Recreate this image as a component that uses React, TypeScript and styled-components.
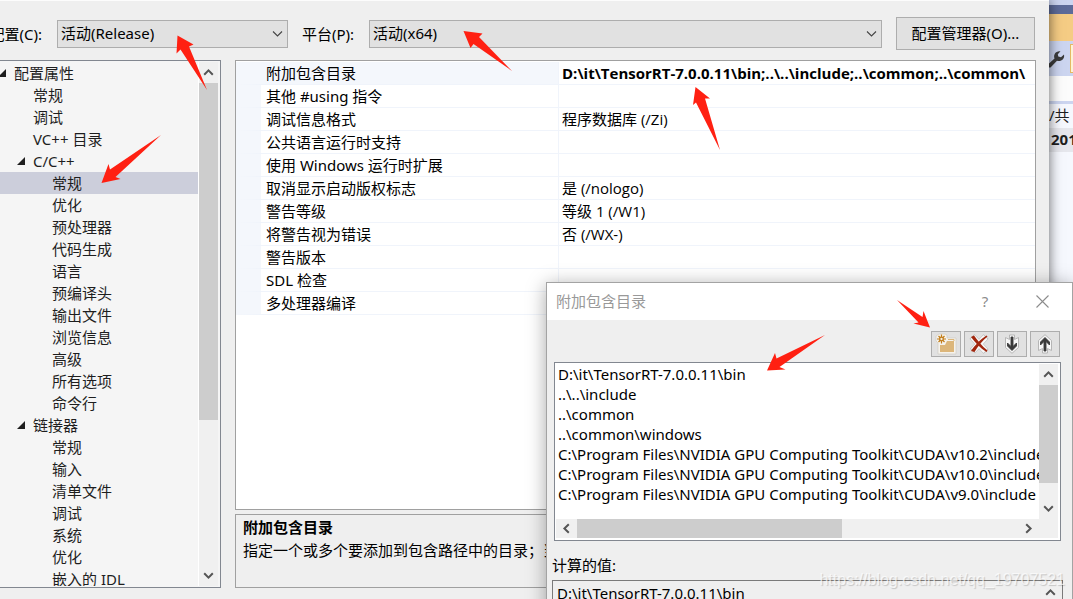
import React from "react";
import styled, { createGlobalStyle } from "styled-components";

const GlobalStyle = createGlobalStyle`
  * { box-sizing: border-box; }
  body {
    margin: 0;
    overflow: hidden;
    background: #efefef;
    color: #000;
    font: 15px/20px "Noto Sans", "Noto Sans CJK SC", sans-serif;
  }
  button, select, textarea, table { font: inherit; color: inherit; }
  ul { margin: 0; padding: 0; list-style: none; }
`;

const Desktop = styled.div`
  position: relative;
  display: flex;
  height: 100vh;
  overflow: hidden;
`;

/* ---------- Property pages window ---------- */

const PropertyWindow = styled.main`
  position: relative;
  z-index: 1;
  flex: 1;
  min-width: 0;
  display: flex;
  flex-direction: column;
  gap: 10px;
  padding: 16px 0 11px;
  background: #efefef;
  border-top: 1px solid #fcfcfc;
  box-shadow: 0 0 12px rgba(0, 0, 0, 0.6);
`;

const ConfigBar = styled.div`
  display: flex;
  align-items: center;
  padding-right: 14px;
`;

const ConfigLabel = styled.label<{ $width: number }>`
  flex: none;
  display: flex;
  justify-content: flex-end;
  width: ${(p) => p.$width}px;
  padding-right: 15px;
  overflow: hidden;
  white-space: nowrap;
`;

const SelectBox = styled.div<{ $width?: number }>`
  position: relative;
  flex: ${(p) => (p.$width ? `0 0 ${p.$width}px` : "1")};
  display: flex;

  svg {
    position: absolute;
    right: 5px;
    top: 10px;
    pointer-events: none;
  }
`;

const Select = styled.select`
  appearance: none;
  width: 100%;
  height: 28px;
  padding: 0 24px 2px 3px;
  border: 1px solid #adadad;
  border-radius: 0;
  background: #e1e1e1;
`;

const ManagerButton = styled.button`
  flex: none;
  width: 139px;
  height: 33px;
  margin-left: 14px;
  padding: 0 0 2px;
  border: 1px solid #adadad;
  background: #e1e1e1;
`;

const Columns = styled.div`
  flex: 1;
  min-height: 0;
  display: flex;
  gap: 14px;
  padding-right: 13px;
`;

const TreePane = styled.nav`
  flex: none;
  display: flex;
  width: 221px;
  padding: 1px 2px 1px 0;
  background: #f5f5f5;
  border: 1px solid #828790;
  border-left: 0;
`;

const TreeList = styled.ul`
  flex: 1;
  overflow: hidden;
  border-right: 1px solid #fff;
  color: #1e1e1e;
  line-height: 22px;
`;

const TreeRow = styled.li<{ $selected?: boolean }>`
  display: flex;
  height: 22px;
  white-space: nowrap;
  background: ${(p) => (p.$selected ? "#cccedb" : "transparent")};
`;

const Indent = styled.span<{ $level: number }>`
  flex: none;
  display: flex;
  align-items: center;
  justify-content: flex-end;
  width: ${(p) => 14 + 19 * p.$level}px;
  padding-right: 8px;

  svg { flex: none; }
`;

const Details = styled.div`
  flex: 1;
  min-width: 0;
  display: flex;
  flex-direction: column;
  gap: 4px;
`;

const GridPane = styled.div`
  flex: 1;
  min-height: 0;
  padding-top: 1px;
  overflow: hidden;
  background: #fff;
  border: 1px solid #a0a0a0;
`;

const PropertyTable = styled.table`
  width: 100%;
  table-layout: fixed;
  border-collapse: separate;
  border-spacing: 0;
`;

const GridRow = styled.tr<{ $active?: boolean }>`
  th, td {
    height: 23px;
    padding: 0 0 0 3px;
    overflow: hidden;
    white-space: nowrap;
    text-align: left;
    font-weight: 400;
    border-bottom: 1px solid #f0f4fb;
  }
  th {
    width: 323px;
    padding-left: 5px;
    border-left: 25px solid #f4f7fc;
    border-right: 1px solid #f0f4fb;
    background: ${(p) => (p.$active ? "#f4f7fc" : "#fff")};
  }
  td {
    font-family: "Open Sans", "Noto Sans CJK SC", sans-serif;
    font-weight: ${(p) => (p.$active ? 700 : 400)};
  }
`;

const Description = styled.section`
  flex: none;
  height: 74px;
  padding: 1px 7px;
  border: 1px solid #a0a0a0;
  overflow: hidden;
  line-height: 23px;
  white-space: nowrap;
`;

const DescriptionTitle = styled.div`
  font-weight: 700;
`;

/* ---------- Scroll bars ---------- */

const ScrollBar = styled.div<{ $horizontal?: boolean }>`
  flex: none;
  display: flex;
  flex-direction: ${(p) => (p.$horizontal ? "row" : "column")};
  ${(p) => (p.$horizontal ? "height" : "width")}: 19px;
  background: #f0f0f0;
`;

const ScrollButton = styled.button`
  flex: none;
  display: flex;
  align-items: center;
  justify-content: center;
  width: 21px;
  height: 21px;
  padding: 0;
  border: 0;
  background: transparent;

  ${ScrollBar} > & { align-self: center; }
`;

const ScrollTrack = styled.div`
  flex: 1;
  min-width: 0;
  min-height: 0;
`;

const ScrollThumb = styled.div<{ $horizontal?: boolean; $size: string }>`
  ${(p) => (p.$horizontal ? "width" : "height")}: ${(p) => p.$size};
  ${(p) => (p.$horizontal ? "height" : "width")}: 19px;
  background: #cdcdcd;
`;

/* ---------- IDE behind the window ---------- */

const IdeStrip = styled.aside`
  flex: none;
  width: 24px;
  overflow: hidden;
  background: #f6f8fe;
  white-space: nowrap;
  color: #1e1e1e;
`;

const Band = styled.div<{ $height: number; $color: string }>`
  height: ${(p) => p.$height}px;
  background: ${(p) => p.$color};
`;

const IdeTools = styled.div`
  display: flex;
  align-items: center;
  gap: 5px;
  height: 35px;
  background: #ccd5f0;

  svg { flex: none; }
`;

const ActiveTool = styled.span`
  flex: none;
  width: 24px;
  height: 29px;
  background: #fdf4d8;
  border: 1px solid #e5b964;
`;

const IdeLine = styled.div<{ $strong?: boolean }>`
  height: 24px;
  padding-left: ${(p) => (p.$strong ? 2 : 0)}px;
  line-height: 22px;
  font-weight: ${(p) => (p.$strong ? 700 : 400)};
  background: ${(p) => (p.$strong ? "#e6e7ed" : "#f6f8fe")};
`;

/* ---------- Include directories dialog ---------- */

const Dialog = styled.section`
  position: absolute;
  z-index: 2;
  top: 282px;
  right: 0;
  width: 527px;
  height: 420px;
  background: #efefef;
  border: 1px solid #a3a3a3;
  box-shadow: 0 3px 18px rgba(0, 0, 0, 0.35);
`;

const TitleBar = styled.header`
  display: flex;
  align-items: center;
  height: 37px;
  padding: 0 9px 1px;
  background: #fff;
  color: #999;
`;

const Title = styled.span`
  flex: 1;
`;

const TitleButton = styled.button`
  width: 42px;
  height: 28px;
  margin-left: 15px;
  padding: 0;
  border: 0;
  background: transparent;
  color: #8c8c8c;

  svg { display: block; margin: auto; }
`;

const DialogTools = styled.div`
  display: flex;
  justify-content: flex-end;
  gap: 3px;
  padding: 11px 12px 5px;
`;

const ToolButton = styled.button`
  display: flex;
  align-items: center;
  justify-content: center;
  width: 30px;
  height: 26px;
  padding: 0;
  border: 1px solid #adadad;
  background: #e1e1e1;
`;

const ListPane = styled.div`
  display: flex;
  height: 179px;
  margin: 0 11px 0 7px;
  padding: 1px 2px 2px 1px;
  background: #fff;
  border: 1px solid #828790;
`;

const ListBody = styled.div`
  flex: 1;
  min-width: 0;
  display: flex;
  flex-direction: column;
`;

const PathList = styled.ul`
  flex: 1;
  padding-left: 2px;
  overflow: hidden;
  white-space: nowrap;
`;

const ScrollSide = styled.div`
  display: flex;
  flex-direction: column;
  padding-bottom: 19px;
  background: #f0f0f0;

  ${ScrollBar} { flex: 1; }
`;

const ValueLabel = styled.label`
  display: block;
  padding: 14px 5px 5px;
`;

const ValueBox = styled.div`
  display: flex;
  height: 100px;
  margin: 0 9px 0 5px;
  padding: 1px 2px 0 0;
  border: 1px solid #7a7a7a;
`;

const ValueText = styled.textarea`
  flex: 1;
  min-width: 0;
  padding: 1px 4px;
  border: 0;
  background: transparent;
  resize: none;
  outline: none;
`;

/* ---------- Annotations ---------- */

const Annotations = styled.svg`
  position: absolute;
  z-index: 3;
  top: 0;
  left: 0;
  pointer-events: none;
`;

const Watermark = styled.div`
  position: absolute;
  z-index: 4;
  right: 8px;
  top: 570px;
  font: 16px/20px "Liberation Sans", sans-serif;
  color: rgba(255, 255, 255, 0.7);
  text-shadow: 1px 1px 1px rgba(0, 0, 0, 0.18);
`;

type Direction = "up" | "down" | "left" | "right";

const turns: Record<Direction, number> = { up: 0, right: 90, down: 180, left: 270 };

const ScrollChevron = ({ direction }: { direction: Direction }) => (
  <svg width="11" height="11" viewBox="0 0 11 11" aria-hidden="true">
    <path
      d="M1.2 7.8 5.5 3.4 9.8 7.8"
      transform={`rotate(${turns[direction]} 5.5 5.5)`}
      fill="none"
      stroke="#555"
      strokeWidth="2"
    />
  </svg>
);

const Scroller = ({ size, horizontal }: { size: string; horizontal?: boolean }) => (
  <ScrollBar $horizontal={horizontal}>
    <ScrollButton aria-label={horizontal ? "向左滚动" : "向上滚动"}>
      <ScrollChevron direction={horizontal ? "left" : "up"} />
    </ScrollButton>
    <ScrollTrack>
      <ScrollThumb $horizontal={horizontal} $size={size} />
    </ScrollTrack>
    <ScrollButton aria-label={horizontal ? "向右滚动" : "向下滚动"}>
      <ScrollChevron direction={horizontal ? "right" : "down"} />
    </ScrollButton>
  </ScrollBar>
);

const DropArrow = () => (
  <svg width="11" height="8" viewBox="0 0 11 8" aria-hidden="true">
    <path d="M1 1.5 5.5 6 10 1.5" fill="none" stroke="#444" strokeWidth="1.1" />
  </svg>
);

const Expander = () => (
  <svg width="8" height="8" viewBox="0 0 8 8" aria-hidden="true">
    <path d="M8 0V8H0Z" fill="#1e1e1e" />
  </svg>
);

const NewFolderIcon = () => (
  <svg width="22" height="22" viewBox="0 0 22 22" aria-hidden="true">
    <path d="M3 10V21H21V5H12V2L10 1H4L1 3V8Z" fill="#f5f2ec" stroke="#c9c6c0" strokeWidth=".6" />
    <path d="M5 12H10L12 8H19V19H5Z" fill="#dcb67a" />
    <path d="M13 6.500H19V8" fill="none" stroke="#dcb67a" />
    <path d="M6.500 1.500V10.500M2 6H11M3.500 3 9.500 9M9.500 3 3.500 9" stroke="#c27d1a" strokeWidth="1.2" />
    <circle cx="6.500" cy="6" r="1.800" fill="#f8efe0" stroke="#c27d1a" strokeWidth="1.300" />
  </svg>
);

const DeleteIcon = () => (
  <svg width="22" height="22" viewBox="0 0 22 22" aria-hidden="true">
    <path d="M4 3.500 18 18.500M18 3.500 4.500 18" stroke="#b8b8b8" strokeWidth="6.800" />
    <path d="M4.500 4 17.500 18M17.500 4 5 17.500" stroke="#f8f8f8" strokeWidth="5.800" />
    <path d="M3 4 6 2.500C9 7 14 13 19.500 17.500L18.500 19C12 15 7 9.500 3 4Z" fill="#a1260d" />
    <path d="M18.500 2.500 19.500 3.500C14 8 10 13 6.500 19L3 18C7 12 13 6 18.500 2.500Z" fill="#a1260d" />
  </svg>
);

const MoveIcon = ({ up }: { up?: boolean }) => (
  <svg width="16" height="20" viewBox="0 0 16 20" aria-hidden="true">
    <g transform={up ? "rotate(180 8 10)" : undefined}>
      <path d="M5.500 1H10.500V5.500L14.500 3.500V13.500L8 19.300 1.500 13.500V3.500L5.500 5.500Z" fill="#f7f7f7" stroke="#b0b0b0" strokeWidth=".9" />
      <path d="M7 3H9V12.500L12.500 9V12L8 16.500 3.500 12V9L7 12.500Z" fill="#3a3a3a" stroke="#3a3a3a" strokeWidth=".9" />
    </g>
  </svg>
);

const WrenchIcon = () => (
  <svg width="16" height="18" viewBox="0 0 16 18" aria-hidden="true">
    <path
      d="M0 13.500 5.500 8.500C4 4.500 7 .5 11.500 1.300L8.800 4.300 9.300 6.500 12 7.200 15 4.500C16 9 12 12 8 10.800L1.500 17.500H0Z"
      fill="#3b3b3b"
    />
  </svg>
);

interface TreeItem {
  name: string;
  level: number;
  open?: boolean;
  selected?: boolean;
}

const tree: TreeItem[] = [
  { name: "配置属性", level: 0, open: true },
  { name: "常规", level: 1 },
  { name: "调试", level: 1 },
  { name: "VC++ 目录", level: 1 },
  { name: "C/C++", level: 1, open: true },
  { name: "常规", level: 2, selected: true },
  { name: "优化", level: 2 },
  { name: "预处理器", level: 2 },
  { name: "代码生成", level: 2 },
  { name: "语言", level: 2 },
  { name: "预编译头", level: 2 },
  { name: "输出文件", level: 2 },
  { name: "浏览信息", level: 2 },
  { name: "高级", level: 2 },
  { name: "所有选项", level: 2 },
  { name: "命令行", level: 2 },
  { name: "链接器", level: 1, open: true },
  { name: "常规", level: 2 },
  { name: "输入", level: 2 },
  { name: "清单文件", level: 2 },
  { name: "调试", level: 2 },
  { name: "系统", level: 2 },
  { name: "优化", level: 2 },
  { name: "嵌入的 IDL", level: 2 },
];

const properties: [string, string][] = [
  ["附加包含目录", "D:\\it\\TensorRT-7.0.0.11\\bin;..\\..\\include;..\\common;..\\common\\"],
  ["其他 #using 指令", ""],
  ["调试信息格式", "程序数据库 (/Zi)"],
  ["公共语言运行时支持", ""],
  ["使用 Windows 运行时扩展", ""],
  ["取消显示启动版权标志", "是 (/nologo)"],
  ["警告等级", "等级 1 (/W1)"],
  ["将警告视为错误", "否 (/WX-)"],
  ["警告版本", ""],
  ["SDL 检查", ""],
  ["多处理器编译", ""],
];

const paths = [
  "D:\\it\\TensorRT-7.0.0.11\\bin",
  "..\\..\\include",
  "..\\common",
  "..\\common\\windows",
  "C:\\Program Files\\NVIDIA GPU Computing Toolkit\\CUDA\\v10.2\\include",
  "C:\\Program Files\\NVIDIA GPU Computing Toolkit\\CUDA\\v10.0\\include",
  "C:\\Program Files\\NVIDIA GPU Computing Toolkit\\CUDA\\v9.0\\include",
];

const arrows = [
  "177.500,35.500 193.500,44.500 189,46.500 207,90 180.500,49.500 176.500,53.500",
  "101.500,183 108.500,164 110,169.500 161,135 115.500,177 120.500,179",
  "463.500,31 482.500,33.500 479,37 512,71 473.500,44 470.500,48",
  "695.500,87 710,98.500 705,98.500 720,150 696,102.500 693,105",
  "767,370.500 775,353 776.500,358.500 825,335 779.500,367 785.500,369.500",
  "930,327.500 923.500,311 922.500,317 897,300 918.500,322.500 913.500,323.500",
];

export default function App() {
  return (
    <Desktop>
      <GlobalStyle />
      <PropertyWindow>
        <ConfigBar>
          <ConfigLabel $width={57} htmlFor="config">配置(C):</ConfigLabel>
          <SelectBox $width={231}>
            <Select id="config">
              <option>活动(Release)</option>
            </Select>
            <DropArrow />
          </SelectBox>
          <ConfigLabel $width={81} htmlFor="platform">平台(P):</ConfigLabel>
          <SelectBox>
            <Select id="platform">
              <option>活动(x64)</option>
            </Select>
            <DropArrow />
          </SelectBox>
          <ManagerButton>配置管理器(O)...</ManagerButton>
        </ConfigBar>

        <Columns>
          <TreePane>
            <TreeList>
              {tree.map((item, i) => (
                <TreeRow key={i} $selected={item.selected}>
                  <Indent $level={item.level}>{item.open && <Expander />}</Indent>
                  {item.name}
                </TreeRow>
              ))}
            </TreeList>
            <Scroller size="70%" />
          </TreePane>

          <Details>
            <GridPane>
              <PropertyTable>
                <tbody>
                  {properties.map(([name, value], i) => (
                    <GridRow key={name} $active={i === 0}>
                      <th scope="row">{name}</th>
                      <td>{value}</td>
                    </GridRow>
                  ))}
                </tbody>
              </PropertyTable>
            </GridPane>
            <Description>
              <DescriptionTitle>附加包含目录</DescriptionTitle>
              指定一个或多个要添加到包含路径中的目录；当
            </Description>
          </Details>
        </Columns>
      </PropertyWindow>

      <IdeStrip>
        <Band $height={5} $color="#ccd5f0" />
        <Band $height={9} $color="#5d6b99" />
        <Band $height={27} $color="#f5cc84" />
        <IdeTools>
          <WrenchIcon />
          <ActiveTool />
        </IdeTools>
        <Band $height={25} $color="#fcfcfc" />
        <Band $height={3} $color="#ccd5f0" />
        <IdeLine>/共</IdeLine>
        <IdeLine $strong>201</IdeLine>
      </IdeStrip>

      <Dialog role="dialog" aria-label="附加包含目录">
        <TitleBar>
          <Title>附加包含目录</Title>
          <TitleButton>?</TitleButton>
          <TitleButton aria-label="关闭">
            <svg width="13" height="13" viewBox="0 0 13 13" aria-hidden="true">
              <path d="M.5.5 12.500 12.500M12.500.5.5 12.500" stroke="#8c8c8c" strokeWidth="1.100" />
            </svg>
          </TitleButton>
        </TitleBar>
        <DialogTools>
          <ToolButton aria-label="新行"><NewFolderIcon /></ToolButton>
          <ToolButton aria-label="删除"><DeleteIcon /></ToolButton>
          <ToolButton aria-label="下移"><MoveIcon /></ToolButton>
          <ToolButton aria-label="上移"><MoveIcon up /></ToolButton>
        </DialogTools>
        <ListPane>
          <ListBody>
            <PathList>
              {paths.map((path) => (
                <li key={path}>{path}</li>
              ))}
            </PathList>
            <Scroller horizontal size="60%" />
          </ListBody>
          <ScrollSide>
            <Scroller size="87%" />
          </ScrollSide>
        </ListPane>
        <ValueLabel htmlFor="value">计算的值:</ValueLabel>
        <ValueBox>
          <ValueText id="value" readOnly defaultValue={"D:\\it\\TensorRT-7.0.0.11\\bin"} />
          <Scroller size="0" />
        </ValueBox>
      </Dialog>

      <Annotations width="1073" height="599" aria-hidden="true">
        {arrows.map((points) => (
          <polygon key={points} points={points} fill="#ff2012" />
        ))}
      </Annotations>
      <Watermark>https://blog.csdn.net/qq_19707521</Watermark>
    </Desktop>
  );
}
